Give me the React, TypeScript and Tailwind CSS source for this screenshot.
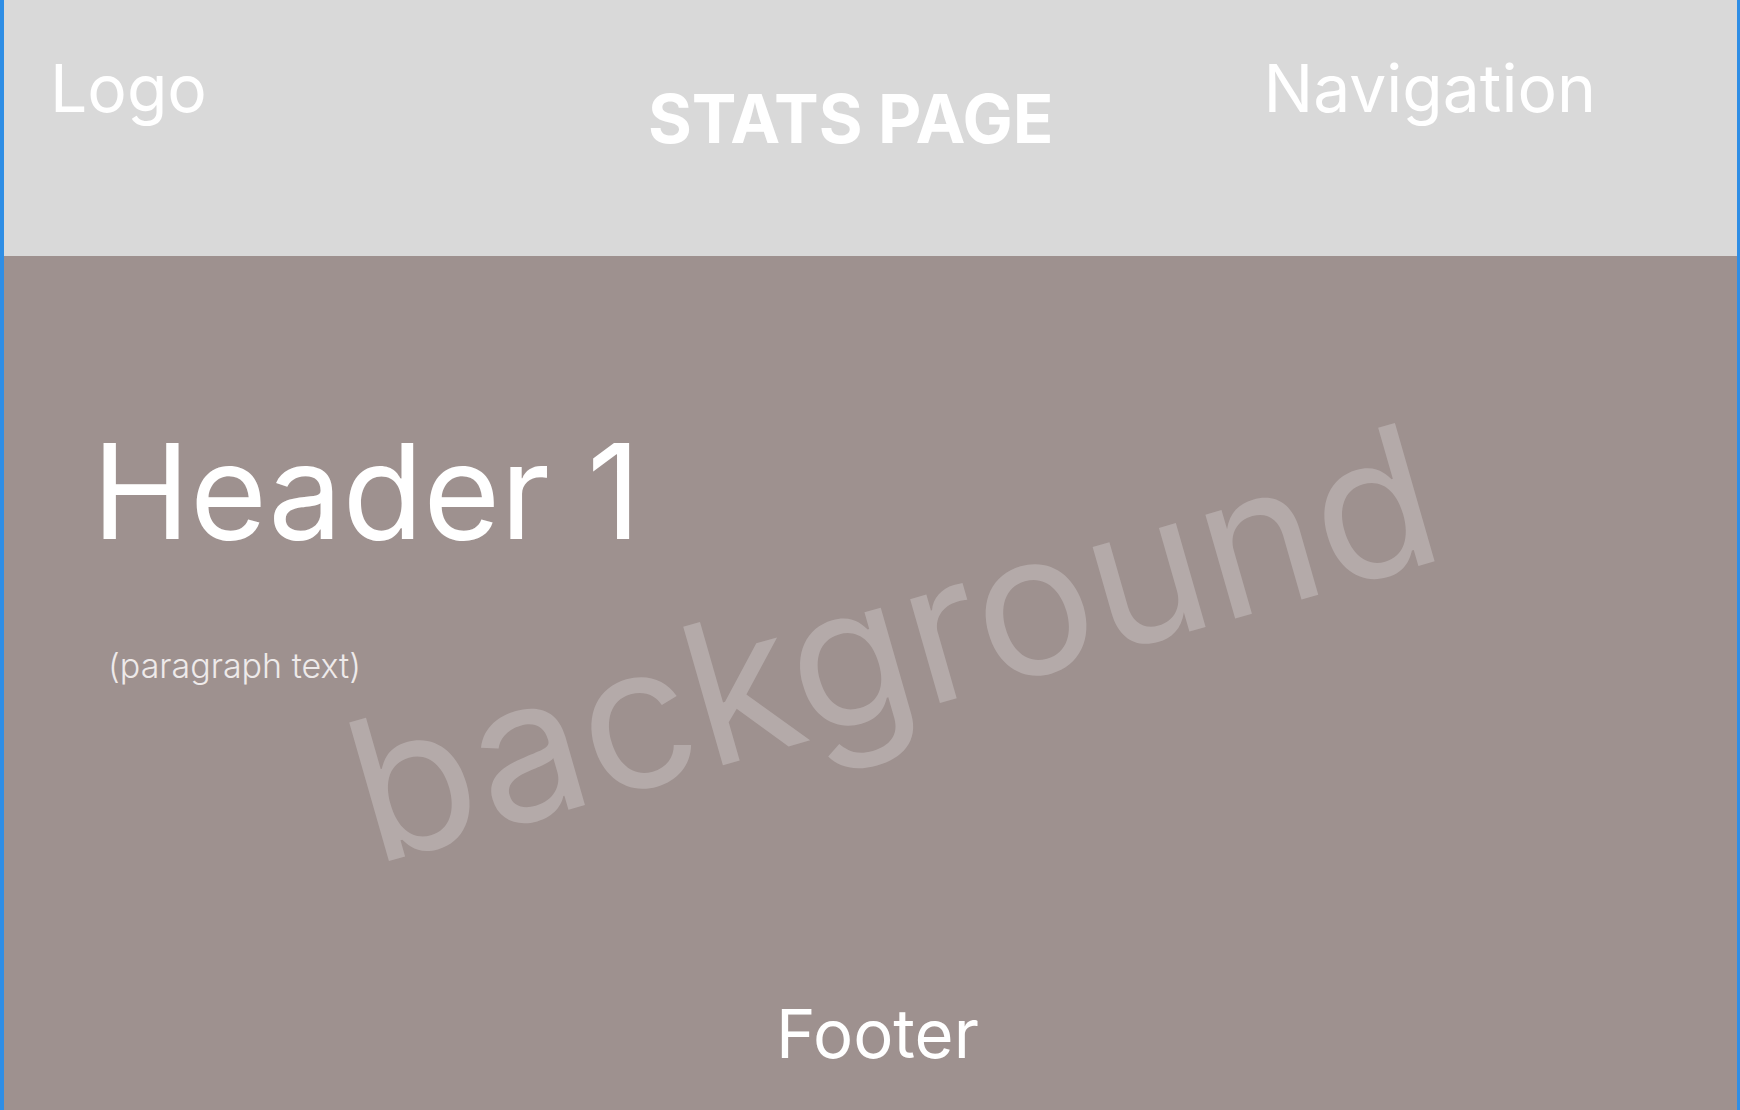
const TopBar = () => (
  <header className="flex h-[256px] shrink-0 items-start bg-[#d9d9d9] text-white">
    <div className="w-[644px] pl-[46px] pt-[55px] text-[66px] leading-none">Logo</div>
    <h2 className="pt-[85px] text-[67px] font-bold leading-none tracking-[-0.2px]">STATS PAGE</h2>
    <nav className="ml-auto pr-[141px] pt-[55px] text-[66px] leading-none">Navigation</nav>
  </header>
);

const Watermark = () => (
  <span className="pointer-events-none absolute left-[888px] top-[386px] -translate-x-1/2 -translate-y-1/2 -rotate-[16deg] whitespace-nowrap text-[198px] leading-none text-[#b4aaa9]">
    background
  </span>
);

export default function App() {
  return (
    <div className="flex h-[1110px] w-full flex-col border-l-4 border-r-[3px] border-[#2f8ee5] font-[Inter,sans-serif]">
      <TopBar />
      <main className="relative flex flex-1 flex-col bg-[#9e918f] text-white">
        <Watermark />
        <h1 className="relative pl-[88px] pt-[169px] text-[132px] leading-none">Header 1</h1>
        <p className="relative pl-[104px] pt-[92px] text-[34px] font-light leading-none text-[#eeeaea]">
          (paragraph text)
        </p>
        <footer className="relative mt-auto flex justify-center pb-[43px] pl-[14px] text-[67px] leading-none">
          Footer
        </footer>
      </main>
    </div>
  );
}
